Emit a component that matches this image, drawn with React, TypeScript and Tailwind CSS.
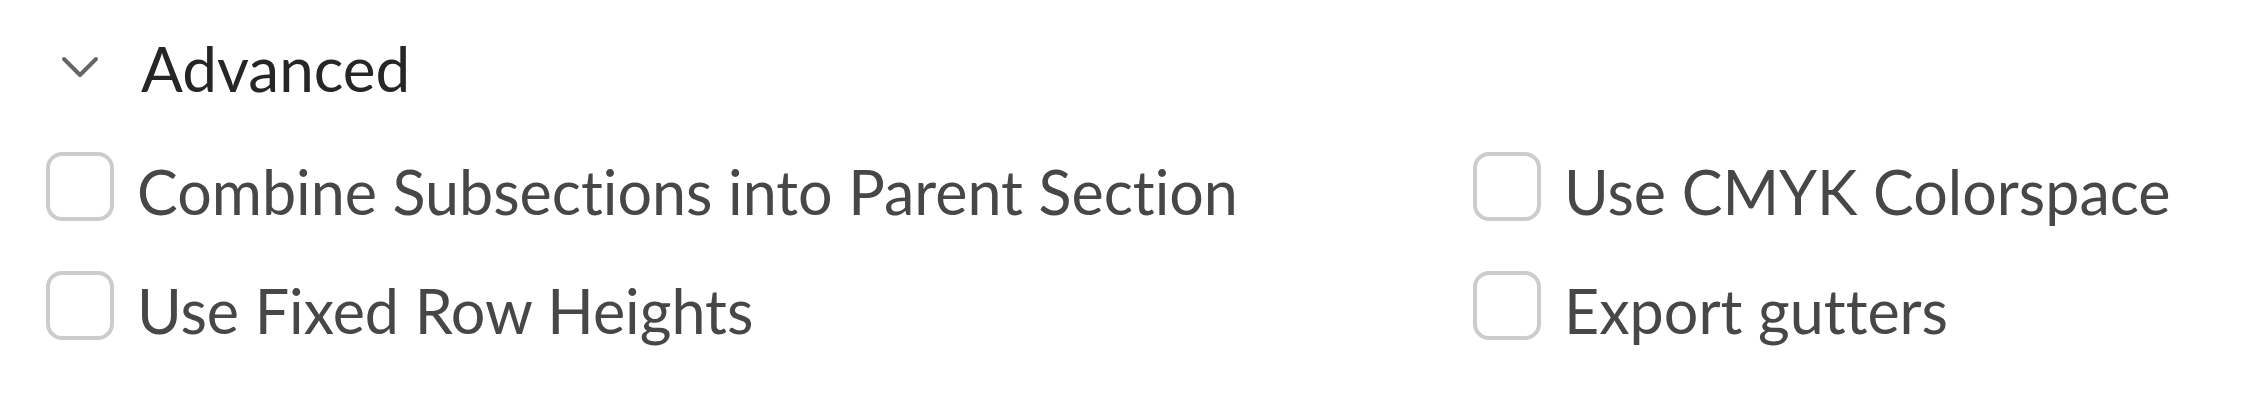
import React, { useState } from 'react';

type Option = { id: string; label: string };

const leftOptions: Option[] = [
  { id: 'combine', label: 'Combine Subsections into Parent Section' },
  { id: 'fixedRows', label: 'Use Fixed Row Heights' },
];

const rightOptions: Option[] = [
  { id: 'cmyk', label: 'Use CMYK Colorspace' },
  { id: 'gutters', label: 'Export gutters' },
];

const Checkbox: React.FC<{ option: Option; checked: boolean; onToggle: () => void }> = ({ option, checked, onToggle }) => (
  <label className="flex items-start cursor-pointer select-none">
    <span
      onClick={onToggle}
      className={`w-[68px] h-[69px] shrink-0 rounded-[16px] border-[4px] border-[#cccccc] ${checked ? 'bg-[#4a4a4a]' : 'bg-white'}`}
    />
    <span className="ml-[23px] mt-[9px] text-[61px] leading-[61px] text-[#474747] whitespace-nowrap [font-variant-ligatures:none]">
      {option.label}
    </span>
  </label>
);

const App: React.FC = () => {
  const [open, setOpen] = useState(true);
  const [checked, setChecked] = useState<Record<string, boolean>>({});

  const toggle = (id: string) => setChecked({ ...checked, [id]: !checked[id] });

  return (
    <div className="w-[2244px] h-[406px] bg-white" style={{ fontFamily: 'Lato, "Open Sans", sans-serif' }}>
      <button
        onClick={() => setOpen(!open)}
        className="flex items-center pt-[37px] pl-[61px] bg-transparent"
      >
        <svg width="40" height="24" viewBox="0 0 40 24" fill="none" className="shrink-0">
          <polyline points="3,3 19,19 35,3" stroke="#666666" strokeWidth="4" strokeLinecap="round" strokeLinejoin="round" />
        </svg>
        <span className="ml-[40px] text-[62px] leading-[62px] text-[#262626] [font-variant-ligatures:none]">Advanced</span>
      </button>

      {open && (
        <div className="grid grid-cols-[1427px_auto] mt-[53px] pl-[46px]">
          <div className="flex flex-col gap-[49px]">
            {leftOptions.map((o) => (
              <Checkbox key={o.id} option={o} checked={!!checked[o.id]} onToggle={() => toggle(o.id)} />
            ))}
          </div>
          <div className="flex flex-col gap-[49px]">
            {rightOptions.map((o) => (
              <Checkbox key={o.id} option={o} checked={!!checked[o.id]} onToggle={() => toggle(o.id)} />
            ))}
          </div>
        </div>
      )}
    </div>
  );
};

export default App;
